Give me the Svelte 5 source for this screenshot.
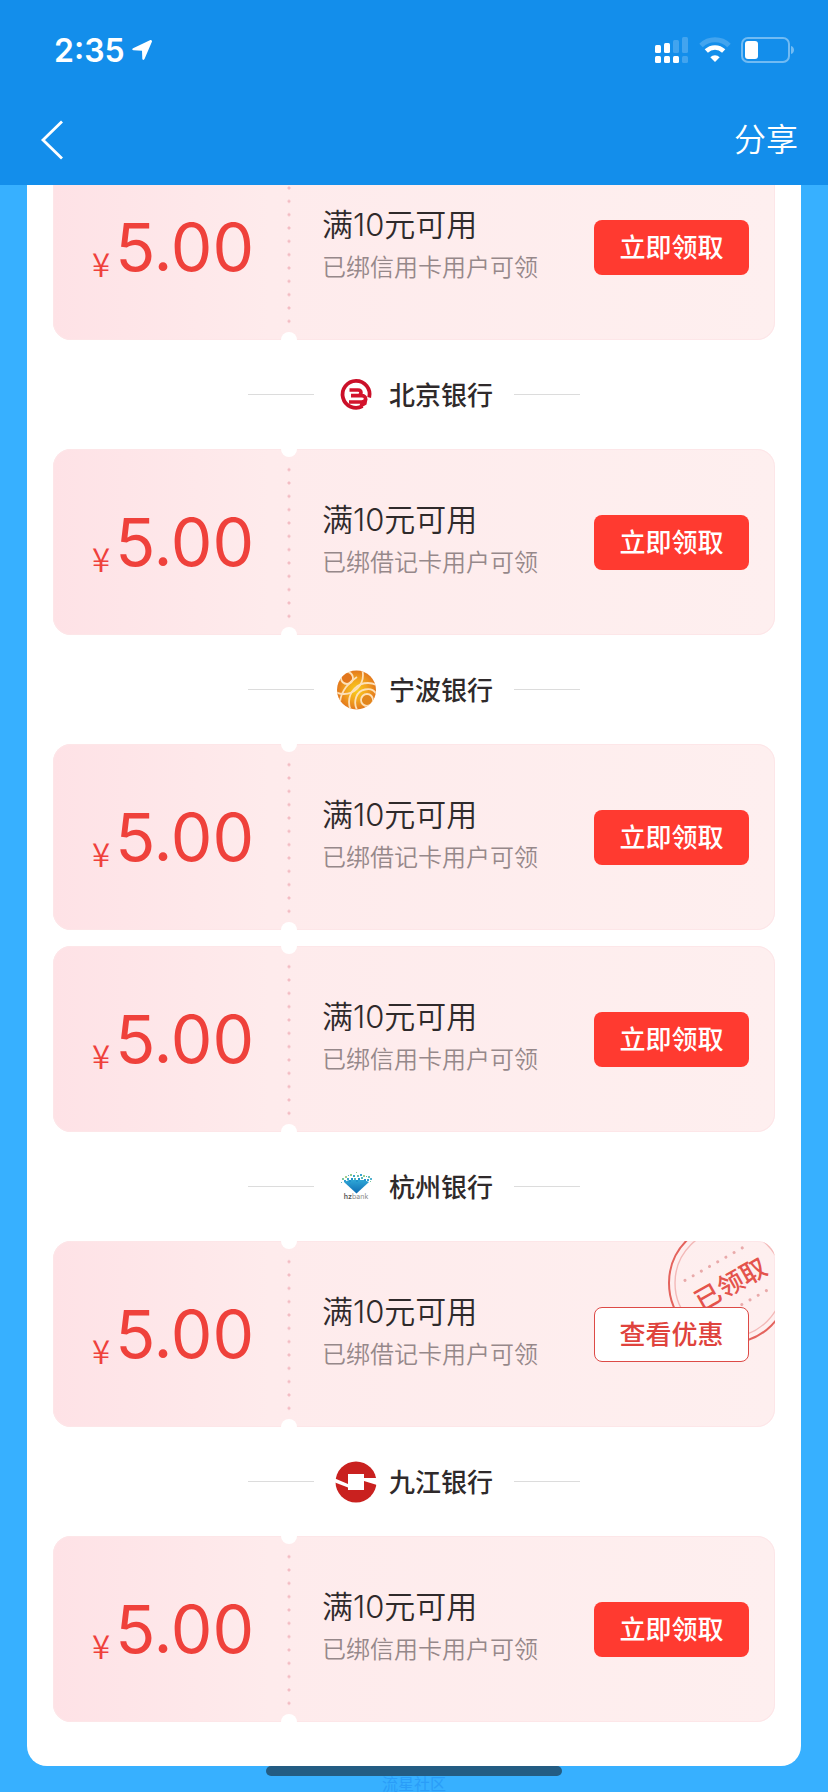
<script>
  const debit = '已绑借记卡用户可领';
  const credit = '已绑信用卡用户可领';

  const groups = [
    { bank: null, coupons: [{ note: credit, claimed: false }] },
    { bank: '北京银行', logo: 'beijing', coupons: [{ note: debit, claimed: false }] },
    {
      bank: '宁波银行',
      logo: 'ningbo',
      coupons: [
        { note: debit, claimed: false },
        { note: credit, claimed: false }
      ]
    },
    { bank: '杭州银行', logo: 'hangzhou', coupons: [{ note: debit, claimed: true }] },
    { bank: '九江银行', logo: 'jiujiang', coupons: [{ note: credit, claimed: false }] }
  ];

  // Loose pixels that scatter above the diamond of the Hangzhou mark
  const pixels = [
    [7, 12, 2, '#7cc6a0'], [10, 10, 2, '#a5cf8a'], [13, 9, 1, '#57b5c4'], [15, 8, 2, '#8ecb92'],
    [18, 9, 2, '#39a6c9'], [21, 6, 1, '#8ecb92'], [22, 9, 2, '#6dbfb0'], [25, 8, 2, '#3aa5d0'],
    [28, 9, 2, '#9bcf8c'], [31, 10, 1, '#3aa5d0'], [33, 10, 2, '#6dbfb0'], [35, 12, 2, '#56b3cf'],
    [9, 14, 2, '#2f9fd0'], [12, 12, 2, '#3eaac9'], [16, 12, 2, '#1f93cc'], [19, 12, 2, '#58b8b8'],
    [23, 12, 2, '#1f93cc'], [26, 11, 2, '#58b8b8'], [29, 13, 2, '#1f93cc'], [32, 13, 2, '#2f9fd0'],
    [6, 16, 1, '#57b5c4'], [14, 14, 2, '#1f93cc'], [21, 14, 2, '#1f93cc'], [35, 15, 1, '#7cc6a0']
  ];
</script>

{#snippet logoMark(name)}
  <svg class="logo" viewBox="0 0 42 42" aria-hidden="true">
    {#if name === 'beijing'}
      <path
        d="M34.200 23.500A13.500 13.500 0 1 0 27.500 32.200"
        fill="none"
        stroke="#cb1029"
        stroke-width="3.800"
      />
      <path
        d="M14.500 16h8.500c4 0 4 5.600 0 5.600H16M23 21.600h3.500c5.500 0 5.500 6.400 0 6.400H14"
        fill="none"
        stroke="#d3132c"
        stroke-width="3.600"
      />
      <path d="M25 29.500l7.500-4.500-1 5.500-7 4z" fill="#d3132c" />
    {:else if name === 'ningbo'}
      <defs>
        <radialGradient id="ningbo-fill" cx="0.500" cy="0.500" r="0.550">
          <stop offset="0" stop-color="#f8cf1c" />
          <stop offset="0.500" stop-color="#f2a31f" />
          <stop offset="1" stop-color="#e0701c" />
        </radialGradient>
        <clipPath id="ningbo-clip"><circle cx="21.500" cy="21" r="19.500" /></clipPath>
      </defs>
      <circle cx="21.500" cy="21" r="19.500" fill="url(#ningbo-fill)" />
      <g clip-path="url(#ningbo-clip)">
        <circle cx="12" cy="9" r="5" fill="#e2761c" />
        <circle cx="32" cy="31" r="5" fill="#e2861c" />
        <g fill="none" stroke="#fde0b8" stroke-width="1.800">
          <circle cx="12" cy="9" r="6" />
          <circle cx="9" cy="6" r="19" />
          <circle cx="32" cy="31" r="6" />
          <circle cx="33" cy="33" r="19" />
          <path d="M22 41C18 33 21 22 30 20.500s10 3 13 6M5 33C6 22 14 13 22 8" />
        </g>
      </g>
    {:else if name === 'hangzhou'}
      <defs>
        <linearGradient id="hz-fill" x1="0" y1="0" x2="0" y2="1">
          <stop offset="0" stop-color="#2fa6d6" />
          <stop offset="1" stop-color="#0d6cb3" />
        </linearGradient>
      </defs>
      <path d="M9 16l5-2h15l5 2-12.500 11.500z" fill="url(#hz-fill)" />
      {#each pixels as [x, y, size, color]}
        <rect {x} {y} width={size} height={size} fill={color} />
      {/each}
      <text x="21" y="33" text-anchor="middle" class="hz-name">
        <tspan class="hz-strong">hz</tspan>bank
      </text>
    {:else}
      <circle cx="21" cy="21" r="20.500" fill="#c9211f" />
      <path d="M0 17.500l13 5.500v3.500L0 21.500zM42 17h-13v3l13 4z" fill="#fff" />
      <rect x="13" y="13" width="16" height="16" fill="#fff" />
    {/if}
  </svg>
{/snippet}

<div class="page">
  <header>
    <div class="status">
      <div class="clock">
        <span>2:35</span>
        <svg width="22" height="22" viewBox="0 0 22 22" aria-hidden="true">
          <path
            d="M20.600 1.400c.5.500.5 1 .2 1.700l-7.300 17c-.5 1.200-2.100 1-2.200-.3l-.3-8.100-8.600-.4c-1.300-.1-1.500-1.600-.3-2.100l16.800-7.900c.7-.3 1.300-.3 1.700.1z"
            fill="#fff"
          />
        </svg>
      </div>
      <div class="signals">
        <svg width="34" height="27" viewBox="0 0 34 27" fill="#fff" aria-hidden="true">
          <rect x="0" y="8" width="6" height="8" rx="1.500" />
          <rect x="9" y="6" width="6" height="10" rx="1.500" />
          <rect x="18" y="3" width="6" height="13" rx="1.500" opacity="0.200" />
          <rect x="27" y="0" width="6" height="16" rx="1.500" opacity="0.200" />
          <rect x="0" y="19" width="6" height="7" rx="1.500" />
          <rect x="9" y="19" width="6" height="7" rx="1.500" />
          <rect x="18" y="19" width="6" height="7" rx="1.500" />
          <rect x="27" y="19" width="6" height="7" rx="1.500" opacity="0.200" />
        </svg>
        <svg width="32" height="26" viewBox="0 0 32 26" aria-hidden="true">
          <path d="M2 8.500a20 20 0 0 1 28 0" fill="none" stroke="#fff" stroke-width="5" opacity="0.200" />
          <path d="M7.300 14a12.400 12.400 0 0 1 17.400 0" fill="none" stroke="#fff" stroke-width="4.600" />
          <path d="M16 25l-4.700-4.800a6.700 6.700 0 0 1 9.400 0z" fill="#fff" />
        </svg>
        <svg width="54" height="26" viewBox="0 0 54 26" aria-hidden="true">
          <rect x="1" y="1" width="47" height="24" rx="6" fill="none" stroke="#fff" stroke-width="2" opacity="0.400" />
          <rect x="4" y="4" width="13" height="18" rx="3" fill="#fff" />
          <path d="M50 9c4 1 4 7 0 8z" fill="#fff" opacity="0.400" />
        </svg>
      </div>
    </div>
    <nav>
      <button class="back" aria-label="返回">
        <svg width="24" height="40" viewBox="0 0 24 40" aria-hidden="true">
          <path d="M22 1.500L3 20l19 18.500" fill="none" stroke="#fff" stroke-width="2.800" />
        </svg>
      </button>
      <button class="share">分享</button>
    </nav>
  </header>

  <main>
    <div class="sheet">
      {#each groups as group}
        <section>
          {#if group.bank}
            <h2>
              {@render logoMark(group.logo)}
              <span>{group.bank}</span>
            </h2>
          {/if}
          <div class="list">
            {#each group.coupons as coupon}
              <article>
                {#if coupon.claimed}
                  <svg class="stamp" viewBox="-62 -62 124 124" aria-label="已领取">
                    <circle r="60" fill="none" stroke="#e4635d" stroke-width="2" />
                    <circle r="54" fill="none" stroke="#f3b9b8" stroke-width="1.400" />
                    <g transform="rotate(-29.500)">
                      <path
                        d="M-37 -24H38M-37 25H38"
                        stroke="#e9aaaa"
                        stroke-width="3"
                        stroke-linecap="round"
                        stroke-dasharray="0 9.400"
                      />
                      <text x="1" y="11" text-anchor="middle">已领取</text>
                    </g>
                  </svg>
                {/if}
                <div class="amount"><small>¥</small><span>5.00</span></div>
                <div class="divider"></div>
                <div class="info">
                  <h3>满10元可用</h3>
                  <p>{coupon.note}</p>
                </div>
                <button class="action" class:outline={coupon.claimed}>
                  {coupon.claimed ? '查看优惠' : '立即领取'}
                </button>
              </article>
            {/each}
          </div>
        </section>
      {/each}
    </div>
  </main>

  <footer>
    <div class="home-bar"></div>
    <span>流星社区</span>
  </footer>
</div>

<style>
  :global(body) {
    background: #37b0ff;
  }

  .page {
    display: flex;
    flex-direction: column;
    min-height: 100vh;
    overflow: hidden;
    font-family: Inter, 'Noto Sans CJK SC', sans-serif;
    color: #2f2a2b;
  }

  button {
    border: 0;
    margin: 0;
    padding: 0;
    background: none;
    color: inherit;
    font: inherit;
    cursor: pointer;
  }

  svg {
    display: block;
    flex: none;
  }

  header {
    position: relative;
    z-index: 1;
    background: #138eeb;
    color: #fff;
  }

  .status {
    display: flex;
    align-items: center;
    justify-content: space-between;
    height: 100px;
    padding: 0 33px 0 54px;
  }

  .clock {
    display: flex;
    align-items: center;
    gap: 6px;
    font-size: 32px;
    font-weight: 600;
  }

  .signals {
    display: flex;
    align-items: center;
    gap: 10px;
  }

  nav {
    display: flex;
    align-items: center;
    justify-content: space-between;
    height: 80px;
    padding: 0 30px 5px 40px;
  }

  .share {
    font-size: 32px;
    font-weight: 350;
    line-height: 40px;
  }

  main {
    padding: 0 27px;
  }

  /* The list is scrolled, so the first coupon starts beneath the header */
  .sheet {
    margin-top: -31px;
    padding: 0 26px 44px;
    border-radius: 0 0 20px 20px;
    background: #fff;
  }

  h2 {
    display: flex;
    align-items: center;
    justify-content: center;
    gap: 12px;
    height: 109px;
    margin: 0;
    font-size: 26px;
    font-weight: 500;
  }

  h2 span {
    padding-bottom: 2px;
  }

  h2::before,
  h2::after {
    content: '';
    width: 66px;
    height: 1px;
    background: #dcdcdc;
  }

  h2::before {
    margin-right: 9px;
  }

  h2::after {
    margin-left: 9px;
  }

  .logo {
    width: 42px;
    height: 42px;
  }

  .hz-name {
    font-size: 7px;
    font-weight: 400;
    fill: #8b8b8b;
  }

  .hz-strong {
    font-weight: 600;
    fill: #555;
  }

  .list {
    display: flex;
    flex-direction: column;
    gap: 16px;
  }

  article {
    position: relative;
    display: flex;
    align-items: center;
    box-sizing: border-box;
    height: 186px;
    padding-right: 26px;
    overflow: hidden;
    border-radius: 18px;
    background: linear-gradient(90deg, #fee2e6 0, #feebec 30%, #feefef 100%);
    box-shadow: inset 0 0 0 1px #fde6e8;
  }

  .amount {
    display: flex;
    align-items: flex-end;
    width: 236px;
    box-sizing: border-box;
    padding-left: 39px;
    color: #ef413b;
    font-size: 66px;
    font-weight: 400;
    line-height: 80px;
    white-space: nowrap;
  }

  .amount span {
    padding-left: 5px;
  }

  .amount small {
    font-family: 'Noto Sans CJK SC', sans-serif;
    font-size: 33px;
    font-weight: 350;
    line-height: 48px;
  }

  .divider {
    align-self: stretch;
    width: 4px;
    margin: 14px -2px 12px;
    background: radial-gradient(circle, #f3bcc3 1px, transparent 2px) 0 0 / 4px 13px;
    background-repeat: no-repeat round;
  }

  .divider::before,
  .divider::after {
    content: '';
    position: absolute;
    left: 228px;
    width: 16px;
    height: 16px;
    border-radius: 50%;
    background: #fff;
  }

  .divider::before {
    top: -8px;
  }

  .divider::after {
    bottom: -8px;
  }

  .info {
    flex: 1;
    padding: 0 0 2px 33px;
    white-space: nowrap;
  }

  h3 {
    margin: 0;
    font-size: 31px;
    font-weight: 350;
    line-height: 44px;
  }

  p {
    margin: 0;
    color: #96888a;
    font-size: 24px;
    font-weight: 350;
    line-height: 42px;
  }

  .action {
    position: relative;
    box-sizing: border-box;
    width: 155px;
    height: 55px;
    padding-bottom: 3px;
    border-radius: 8px;
    background: #ff3a30;
    color: #fff;
    font-size: 26px;
    font-weight: 500;
  }

  .outline {
    border: 1px solid #dd4a46;
    background: #fff;
    color: #df433d;
  }

  /* Seal printed over the coupon's corner, cut off by its edges */
  .stamp {
    position: absolute;
    top: -20px;
    right: -16px;
    width: 124px;
    height: 124px;
  }

  .stamp text {
    fill: #e4534c;
    font-size: 26px;
    font-weight: 500;
  }

  footer {
    display: flex;
    flex-direction: column;
    align-items: center;
    height: 26px;
  }

  .home-bar {
    flex: none;
    width: 296px;
    max-width: 80%;
    height: 10px;
    border-radius: 5px;
    background: #235c83;
  }

  footer span {
    color: #2a9df8;
    font-size: 16px;
    line-height: 16px;
  }
</style>
